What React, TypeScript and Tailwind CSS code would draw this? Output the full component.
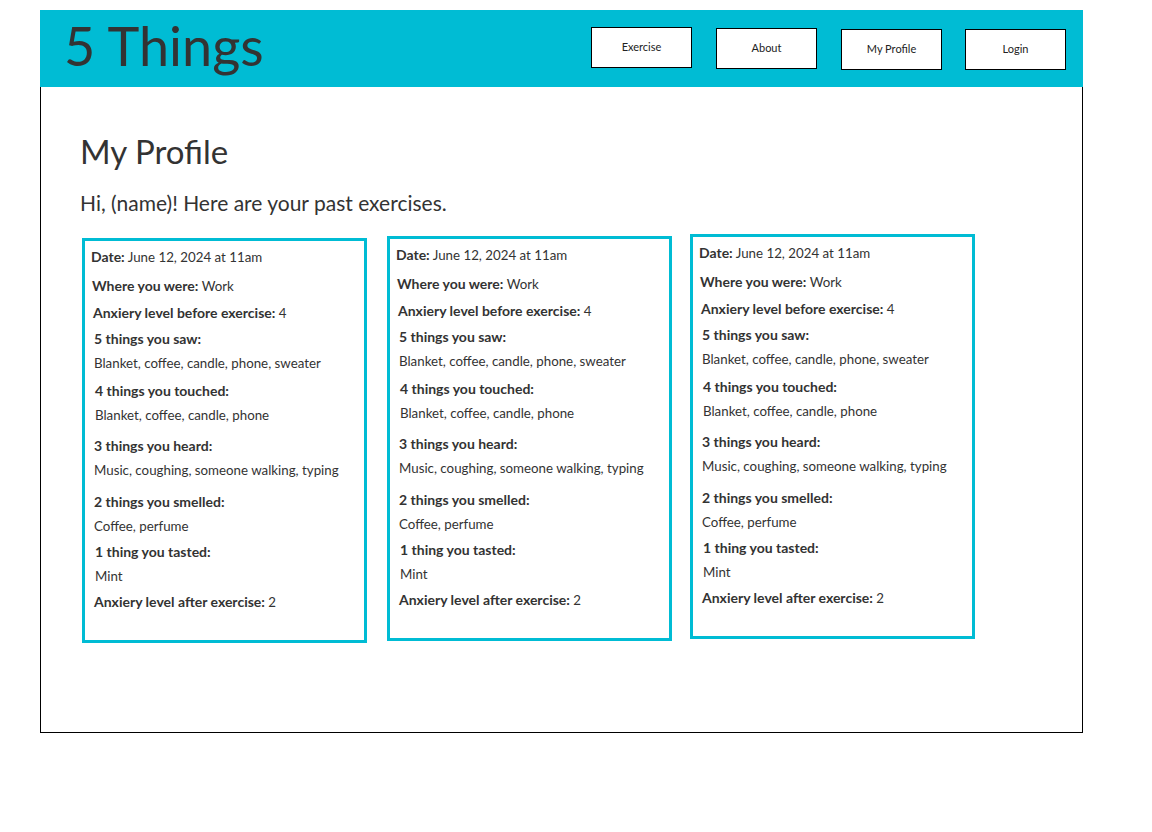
import React from "react";

type Row = { label: string; value?: string; block?: boolean };

const rows: Row[] = [
  { label: "Date:", value: "June 12, 2024 at 11am" },
  { label: "Where you were:", value: "Work" },
  { label: "Anxiery level before exercise:", value: "4" },
  { label: "5 things you saw:" },
  { label: "", value: "Blanket, coffee, candle, phone, sweater", block: true },
  { label: "4 things you touched:" },
  { label: "", value: "Blanket, coffee, candle, phone", block: true },
  { label: "3 things you heard:" },
  { label: "", value: "Music, coughing, someone walking, typing", block: true },
  { label: "2 things you smelled:" },
  { label: "", value: "Coffee, perfume", block: true },
  { label: "1 thing you tasted:" },
  { label: "", value: "Mint", block: true },
  { label: "Anxiery level after exercise:", value: "2" },
];

// spacing per row, picked off the mockup (it is hand drawn, so a bit uneven)
const rowClass = [
  "pl-[6px]",
  "pl-[7px] mt-[13px]",
  "pl-[8px] mt-[11px]",
  "pl-[9px] mt-[10px]",
  "pl-[9px] mt-[8px]",
  "pl-[10px] mt-[12px]",
  "pl-[10px] mt-[8px]",
  "pl-[9px] mt-[15px]",
  "pl-[9px] mt-[8px]",
  "pl-[9px] mt-[16px]",
  "pl-[9px] mt-[8px]",
  "pl-[10px] mt-[10px]",
  "pl-[10px] mt-[8px]",
  "pl-[9px] mt-[10px]",
];

const navItems = [
  { label: "Exercise", cls: "mt-[17px]" },
  { label: "About", cls: "mt-[18px]" },
  { label: "My Profile", cls: "mt-[19px]" },
  { label: "Login", cls: "mt-[19px] -ml-px" },
];

const ExerciseCard = ({ offset }: { offset: string }) => (
  <div className={`w-[285px] border-[3px] border-[#00bcd4] bg-white pt-[8px] pb-[30px] ${offset}`}>
    {rows.map((r, i) => (
      <div key={i} className={`h-4 leading-4 text-[13.3px] text-[#333] whitespace-nowrap ${rowClass[i]}`}>
        {r.label && <span className="font-bold text-[14px]">{r.label}</span>}
        {r.value && (r.block ? r.value : ` ${r.value}`)}
      </div>
    ))}
  </div>
);

export default function App() {
  return (
    <div className="bg-white min-h-[832px] pt-[10px] pl-[40px]" style={{ fontFamily: "Lato, 'Open Sans', sans-serif" }}>
      <div className="w-[1043px]">
        <header className="h-[77px] bg-[#00bcd4] flex items-start">
          <h1 className="ml-[24px] mt-[4px] text-[54px] leading-[64px] text-[#333]">5 Things</h1>
          <nav className="ml-auto mr-[17px] flex gap-6">
            {navItems.map((n) => (
              <button
                key={n.label}
                className={`w-[101px] h-[41px] bg-white border border-black text-[11px] text-[#222] ${n.cls}`}
              >
                {n.label}
              </button>
            ))}
          </nav>
        </header>
        <main className="h-[646px] border-x border-b border-black pl-[39px] pt-[43px]">
          <h2 className="text-[33px] leading-[42px] text-[#333]">My Profile</h2>
          <p className="mt-[17px] text-[21px] leading-[28px] text-[#333]">
            Hi, (name)! Here are your past exercises.
          </p>
          <div className="mt-[17px] ml-[2px] flex items-start">
            <ExerciseCard offset="mt-[4px]" />
            <ExerciseCard offset="ml-[20px] mt-[2px] w-[284px]" />
            <ExerciseCard offset="ml-[18px]" />
          </div>
        </main>
      </div>
    </div>
  );
}
